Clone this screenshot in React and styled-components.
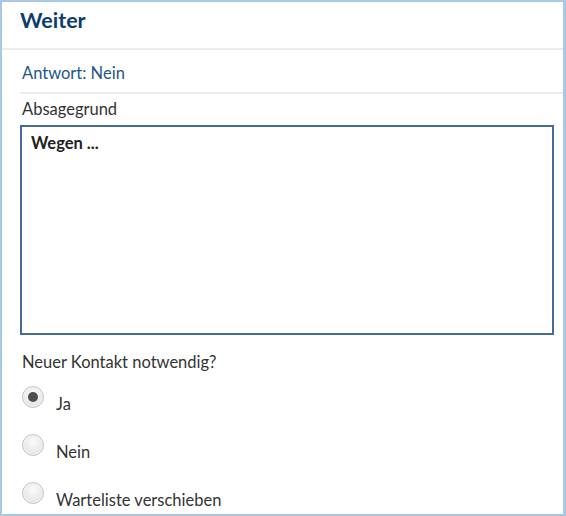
import React from 'react';
import styled, {createGlobalStyle} from 'styled-components';

const Global = createGlobalStyle`
  body {
    margin: 0;
    background: #fff;
    font-family: Lato, "Liberation Sans", sans-serif;
  }
`;

const Panel = styled.section`
  width: 566px;
  height: 516px;
  box-sizing: border-box;
  border: 2px solid #a9c8e8;
  border-right-width: 3px;
  background: #fff;
  overflow: hidden;
`;

const Header = styled.h2`
  margin: 0;
  height: 48px;
  padding: 5px 18px 0;
  box-sizing: border-box;
  border-bottom: 2px solid #ececec;
  font-size: 21.5px;
  font-weight: 700;
  color: #0d3c6e;
`;

const Body = styled.div`
  padding: 0 0 0 18px;
`;

const Answer = styled.div`
  height: 44px;
  box-sizing: border-box;
  padding: 4px 0 0 2px;
  display: flex;
  align-items: center;
  border-bottom: 2px solid #ececec;
  font-size: 16.5px;
  color: #24558a;
`;

const Label = styled.div`
  font-size: 16.5px;
  color: #333;
  padding-left: 2px;
  margin: ${p => p.$top || 0}px 0 0;
  line-height: 18px;
`;

const Textarea = styled.textarea`
  display: block;
  width: 534px;
  height: 210px;
  margin: 7px 0 0;
  box-sizing: border-box;
  border: 2px solid #456c94;
  padding: 7px 9px;
  resize: none;
  font-family: Lato, "Liberation Sans", sans-serif;
  font-size: 16.5px;
  line-height: 18px;
  font-weight: 700;
  color: #222;
  outline: none;
`;

const Options = styled.div`
  display: flex;
  flex-direction: column;
  gap: 21px;
  margin-top: 15px;
  padding-left: 2px;
`;

const Option = styled.label`
  display: flex;
  align-items: flex-start;
  gap: 12px;
  font-size: 16.5px;
  color: #333;
  cursor: pointer;
`;

const Radio = styled.span`
  width: 22px;
  height: 22px;
  flex: none;
  box-sizing: border-box;
  border-radius: 50%;
  border: 1px solid #c4c4c4;
  background: radial-gradient(circle at 50% 35%, #fbfbfb 0%, #e9e9e9 60%, #d6d6d6 100%);
  box-shadow: inset 0 0 0 1px #f5f5f5;
  display: flex;
  align-items: center;
  justify-content: center;
  &::after {
    content: '';
    width: 10px;
    height: 10px;
    border-radius: 50%;
    background: #4e4e4e;
    display: ${p => (p.$checked ? 'block' : 'none')};
  }
`;

const OptionText = styled.span`
  padding-top: 9px;
  line-height: 18px;
`;

const choices = ['Ja', 'Nein', 'Warteliste verschieben'];

export default function App() {
  return (
    <>
      <Global />
      <Panel>
        <Header>Weiter</Header>
        <Body>
          <Answer>Antwort: Nein</Answer>
          <Label $top={6}>Absagegrund</Label>
          <Textarea defaultValue="Wegen ..." />
          <Label $top={18}>Neuer Kontakt notwendig?</Label>
          <Options>
            {choices.map((c, i) => (
              <Option key={c}>
                <Radio $checked={i === 0} />
                <OptionText>{c}</OptionText>
              </Option>
            ))}
          </Options>
        </Body>
      </Panel>
    </>
  );
}
